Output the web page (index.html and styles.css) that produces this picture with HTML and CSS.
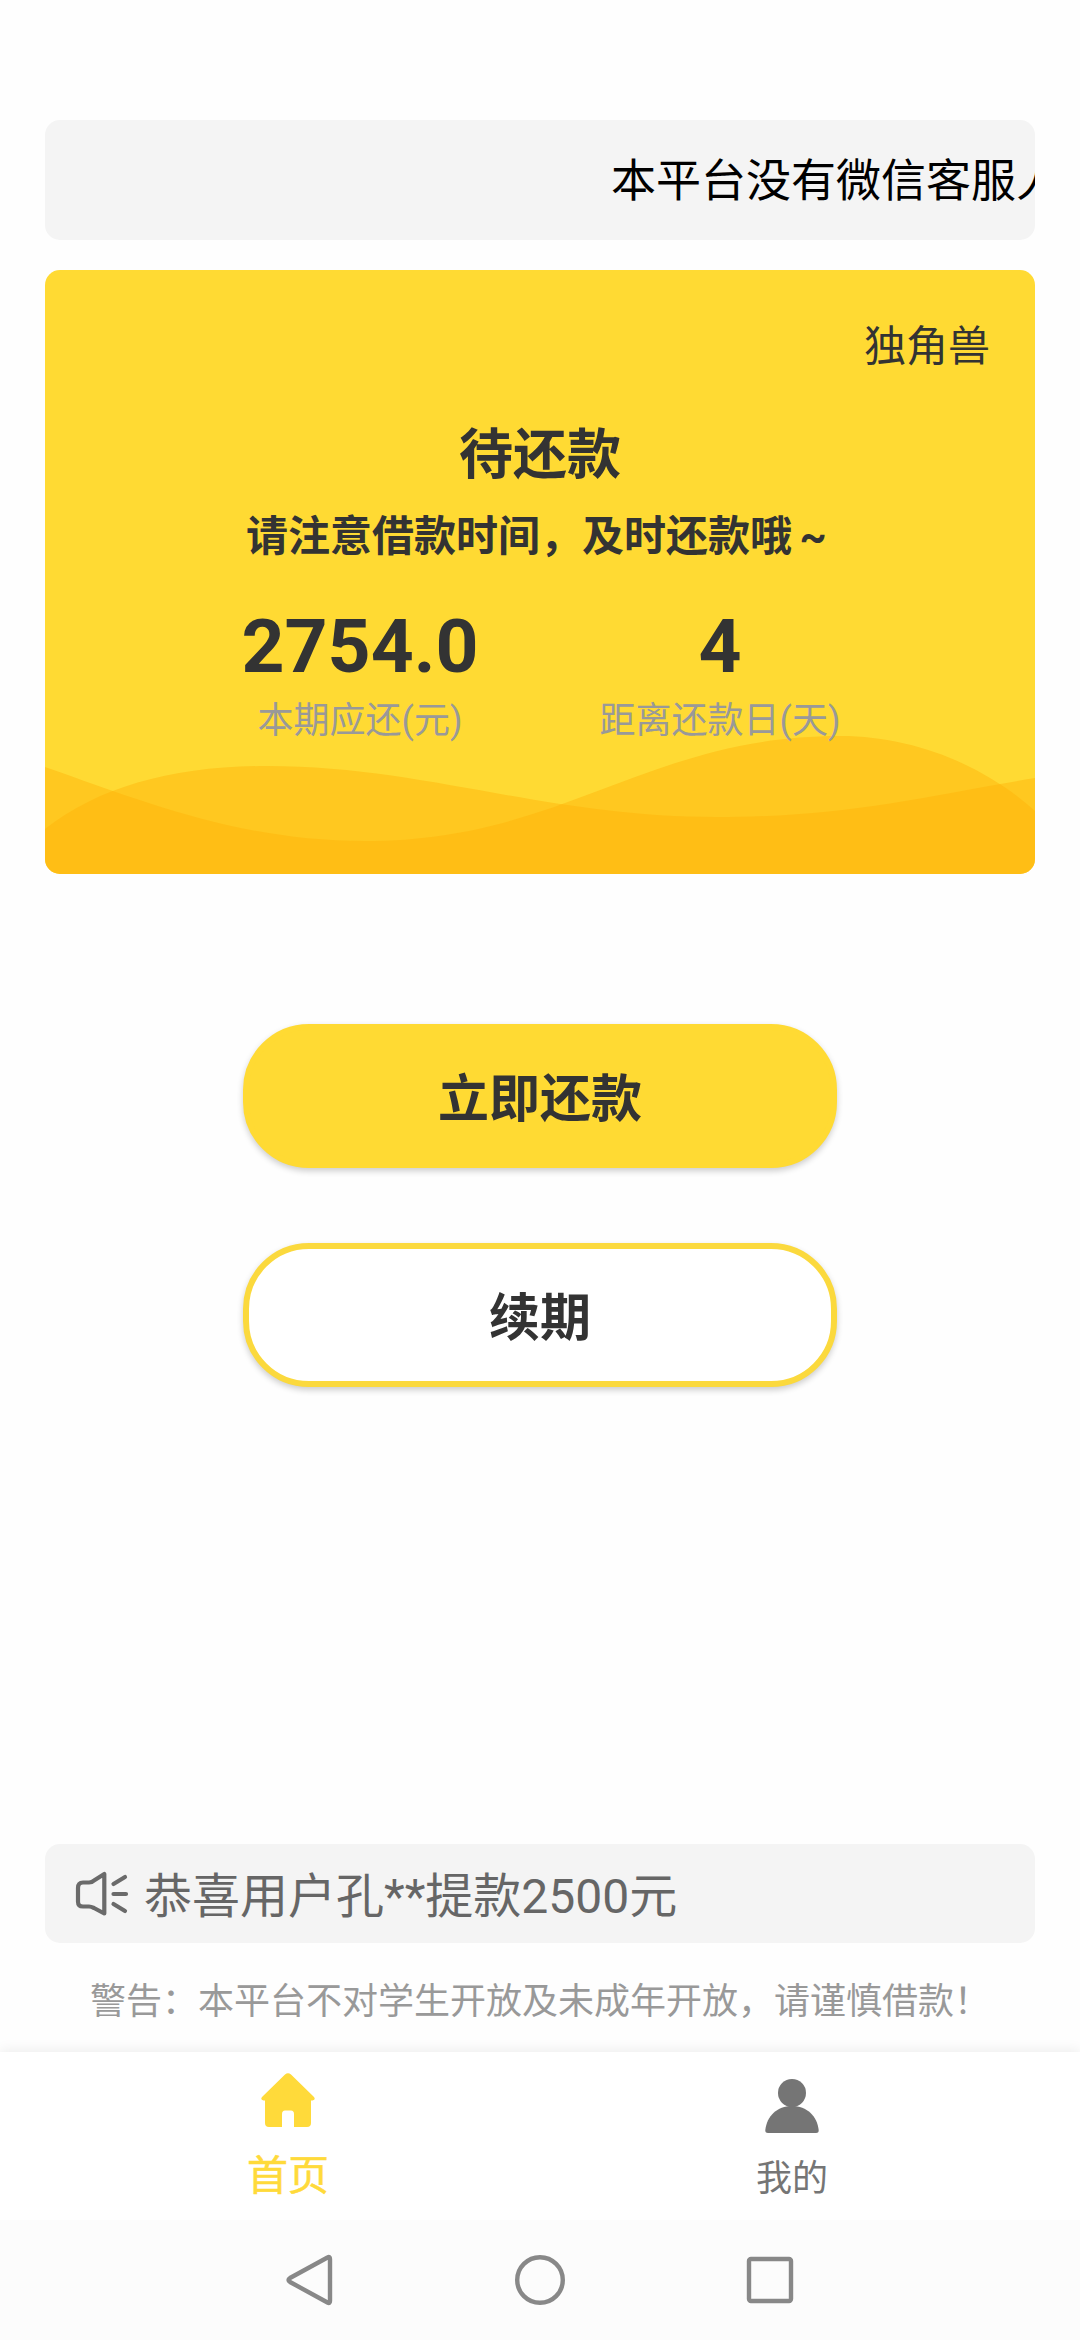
FILE: index.html
```html
<!DOCTYPE html>
<html lang="zh-CN">
<head>
<meta charset="utf-8">
<title>首页</title>
<link rel="stylesheet" href="styles.css">
</head>
<body>
<div class="screen">
  <main class="content">
    <div class="notice"><span class="notice-text">本平台没有微信客服人</span></div>
    <section class="card">
      <svg class="waves" viewBox="0 0 990 144" preserveAspectRatio="none">
        <path class="wave" d="M0 99 C55 56 130 36 222 36 C380 36 500 87 671 87 C800 87 870 68 990 48 V144 H0Z"/>
        <path class="wave" d="M0 37 C100 72 195 111 320 111 C520 111 600 6 795 6 C870 6 940 36 990 81 V144 H0Z"/>
      </svg>
      <div class="brand">独角兽</div>
      <h1 class="status">待还款</h1>
      <p class="hint">请注意借款时间，及时还款哦<span class="tilde">~</span></p>
      <div class="stats">
        <div class="stat"><div class="value">2754.0</div><div class="label">本期应还(元)</div></div>
        <div class="stat"><div class="value">4</div><div class="label">距离还款日(天)</div></div>
      </div>
    </section>
    <div class="actions">
      <button class="btn btn-primary">立即还款</button>
      <button class="btn btn-outline">续期</button>
    </div>
    <div class="news">
      <svg class="speaker" viewBox="0 0 54 48">
        <path d="M3 18 Q3 12.500 8 12.500 H14 Q17 12.500 19 10.500 L29.300 4 V43.500 L19 38 Q16 36.500 14 36.500 H8 Q3 36.500 3 31.500Z"/>
        <path d="M38.500 14 L50 7 M38.500 24 H51 M38.500 34 L50 41"/>
      </svg>
      <span class="news-text">恭喜用户孔**提款2500元</span>
    </div>
    <p class="warning">警告：本平台不对学生开放及未成年开放，请谨慎借款！</p>
  </main>
  <nav class="tabs">
    <a class="tab tab-active">
      <svg class="tab-icon" viewBox="0 0 54 54"><path d="M24 1.500 Q27 -1 30 1.500 L53 24 Q55 27 51.500 27.500 H50 V50 Q50 54 46 54 H33 V41 Q33 37.500 30 37.500 H24 Q21 37.500 21 41 V54 H8 Q4 54 4 50 V27.500 H2.500 Q-1 27 1 24Z"/></svg>
      <span>首页</span>
    </a>
    <a class="tab">
      <svg class="tab-icon" viewBox="0 0 54 54"><circle cx="27" cy="14" r="14"/><path d="M3 54 Q0 54 0.300 51 C2 37 12 27 27 27 C42 27 52 37 53.700 51 Q54 54 51 54Z"/></svg>
      <span>我的</span>
    </a>
  </nav>
  <footer class="system">
    <svg viewBox="0 0 52 52"><path d="M43.500 3.500 Q46 2 46 5 V47 Q46 50 43.500 48.500 L6 28 Q3 26 6 24Z"/></svg>
    <svg viewBox="0 0 52 52"><circle cx="26" cy="26" r="22.800"/></svg>
    <svg viewBox="0 0 52 52"><rect x="5" y="5" width="42" height="42" rx="2"/></svg>
  </footer>
</div>
</body>
</html>
```

FILE: styles.css
```css
* { box-sizing: border-box; margin: 0; padding: 0; }
body {
  background: #fefefe;
  font-family: Roboto, "Noto Sans CJK SC", sans-serif;
  color: #333;
}
.screen { width: 1080px; height: 2340px; display: flex; flex-direction: column; overflow: hidden; }
.content { flex: 1; display: flex; flex-direction: column; padding: 120px 45px 0; }
.notice {
  height: 120px;
  padding: 4px 0 0 566px;
  display: flex;
  align-items: center;
  background: #f4f4f4;
  border-radius: 15px;
  overflow: hidden;
}
.notice-text { flex: none; font-size: 45px; line-height: 60px; color: #000; white-space: nowrap; }
.card {
  position: relative;
  height: 604px;
  margin-top: 30px;
  padding-top: 47px;
  background: #ffda33;
  border-radius: 15px;
  overflow: hidden;
  text-align: center;
}
.card > * { position: relative; }
.card > .waves { position: absolute; left: 0; bottom: 0; width: 990px; height: 144px; }
.wave { fill: #ffb209; fill-opacity: .45; }
.brand { padding-right: 45px; text-align: right; font-size: 42px; line-height: 60px; }
.status { margin-top: 45px; font-size: 54px; line-height: 68px; font-weight: 700; }
.hint { margin-top: 17px; font-size: 42px; line-height: 60px; font-weight: 700; }
.tilde { display: inline-block; width: 42px; }
.stats { display: grid; grid-template-columns: 270px 270px; column-gap: 90px; justify-content: center; margin-top: 35px; }
.value { font-size: 75px; line-height: 88px; font-weight: 700; }
.label { margin-top: 9px; font-size: 36px; line-height: 44px; color: #999; white-space: nowrap; }
.actions { display: flex; flex-direction: column; align-items: center; gap: 75px; margin-top: 150px; }
.btn {
  width: 594px;
  height: 144px;
  padding-top: 8px;
  border: 6px solid #ffda33;
  border-radius: 66px;
  font: 700 51px/60px Roboto, "Noto Sans CJK SC", sans-serif;
  color: #333;
  box-shadow: 0 3px 6px rgba(0, 0, 0, .2);
}
.btn-primary { background: #ffda33; }
.btn-outline { background: #fff; border-color: #fbd93d; }
.news {
  height: 99px;
  margin-top: 457px;
  padding-left: 30px;
  display: flex;
  align-items: center;
  gap: 15px;
  background: #f4f4f4;
  border-radius: 15px;
  font-size: 48px;
  line-height: 60px;
  color: #666;
}
.news-text { padding-top: 6px; }
.speaker { width: 54px; height: 48px; fill: none; stroke: #6a6a6a; stroke-width: 4.2; stroke-linecap: round; stroke-linejoin: round; }
.warning { margin-top: 32px; padding: 0 45px; font-size: 36px; line-height: 54px; color: #999; white-space: nowrap; }
.tabs {
  height: 168px;
  display: flex;
  padding: 0 36px;
  background: #fff;
  box-shadow: 0 -2px 12px rgba(0, 0, 0, .07);
}
.tab { flex: 1; display: flex; flex-direction: column; align-items: center; padding-top: 27px; gap: 21px; font-size: 36px; line-height: 50px; color: #757575; }
.tab-active { padding-top: 21px; gap: 24px; font-size: 41px; color: #ffda3a; -webkit-text-stroke: .5px #ffda3a; }
.tab-icon { width: 54px; height: 54px; fill: currentColor; flex: none; }
.system {
  position: relative;
  height: 120px;
  display: flex;
  align-items: center;
  justify-content: space-between;
  padding: 0 284px;
  background: #fcfcfc;
}
.system svg { width: 52px; height: 52px; fill: none; stroke: #888; stroke-width: 4.4; stroke-linejoin: round; }
```
